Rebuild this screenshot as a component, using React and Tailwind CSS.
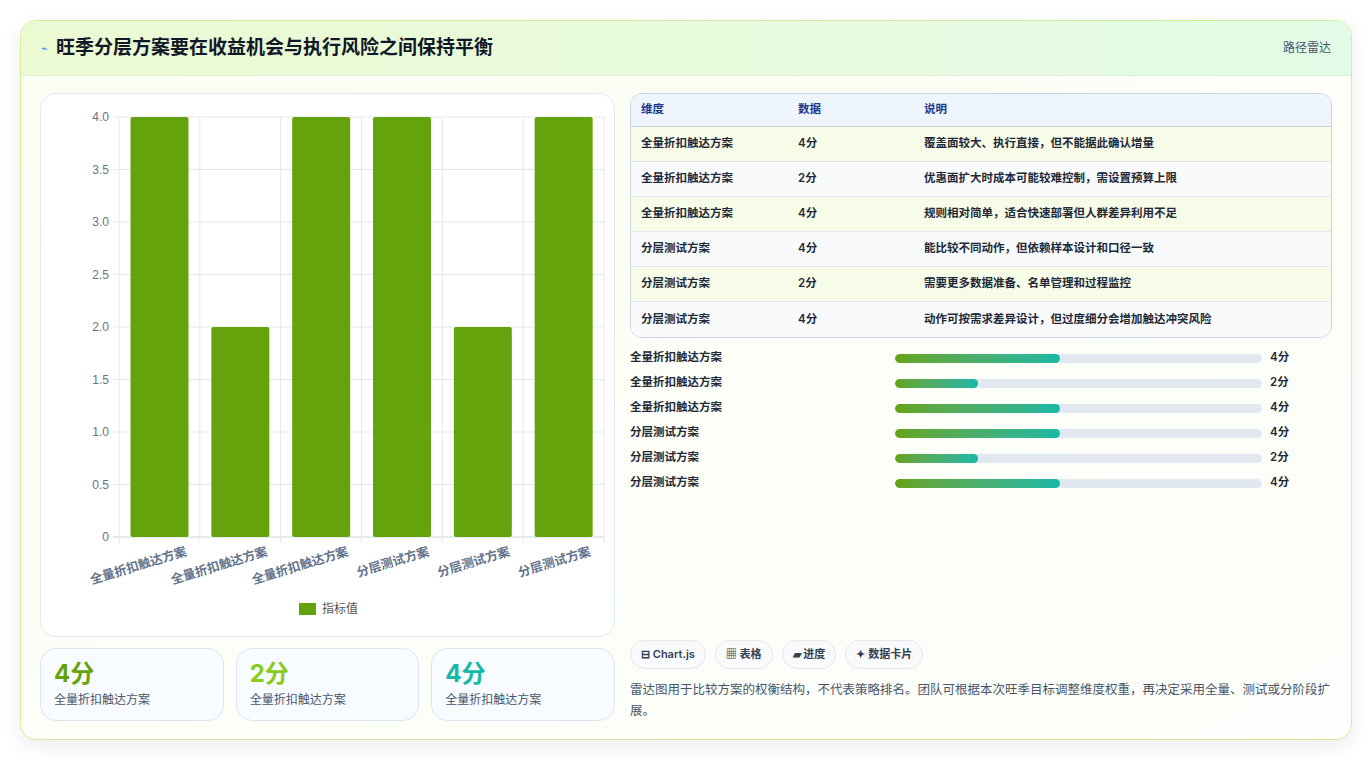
import React from "react";

const cats = ["全量折扣触达方案","全量折扣触达方案","全量折扣触达方案","分层测试方案","分层测试方案","分层测试方案"];
const vals = [4,2,4,4,2,4];
const rows = [
  ["全量折扣触达方案","4分","覆盖面较大、执行直接，但不能据此确认增量"],
  ["全量折扣触达方案","2分","优惠面扩大时成本可能较难控制，需设置预算上限"],
  ["全量折扣触达方案","4分","规则相对简单，适合快速部署但人群差异利用不足"],
  ["分层测试方案","4分","能比较不同动作，但依赖样本设计和口径一致"],
  ["分层测试方案","2分","需要更多数据准备、名单管理和过程监控"],
  ["分层测试方案","4分","动作可按需求差异设计，但过度细分会增加触达冲突风险"],
];

function Chart() {
  const x0 = 78, x1 = 563, y0 = 23, y1 = 443;
  const cw = (x1 - x0) / 6;
  const ticks = [0,0.5,1,1.5,2,2.5,3,3.5,4];
  return (
    <svg width="573" height="542" className="block">
      {ticks.map(t => {
        const y = y1 - (t / 4) * (y1 - y0);
        return (
          <g key={t}>
            <line x1={x0 - 6} x2={x1} y1={y} y2={y} stroke={t === 0 ? "#cbd5e1" : "#e5e7eb"} />
            <text x={x0 - 10} y={y + 4} textAnchor="end" fontSize="12" fill="#6b7280" fontFamily="Liberation Sans, sans-serif">{t === 0 ? "0" : t.toFixed(1)}</text>
          </g>
        );
      })}
      {Array.from({ length: 7 }).map((_, i) => (
        <line key={i} x1={x0 + i * cw} x2={x0 + i * cw} y1={y0} y2={y1 + 6} stroke="#e5e7eb" />
      ))}
      {vals.map((v, i) => {
        const h = (v / 4) * (y1 - y0);
        return <rect key={i} x={x0 + i * cw + 11.5} y={y1 - h} width={58} height={h} rx="2" fill="#65a30d" />;
      })}
      {cats.map((c, i) => (
        <text key={i} transform={`translate(${x0 + i * cw + cw / 2 + 28},${y1 + 18}) rotate(-17)`} textAnchor="end" fontSize="12.5" fontWeight="600" fill="#64748b" fontFamily="Noto Sans CJK SC, sans-serif">{c}</text>
      ))}
      <rect x="258" y="509" width="17" height="12" fill="#65a30d" />
      <text x="281" y="519" fontSize="12" fill="#555" fontFamily="Noto Sans CJK SC, sans-serif">指标值</text>
    </svg>
  );
}

export default function App() {
  return (
    <div className="w-[1372px] h-[760px] bg-white p-5" style={{ fontFamily: "Inter, 'Noto Sans CJK SC', sans-serif" }}>
      <div className="h-[720px] rounded-2xl border border-[#d4ed9c] shadow-[0_6px_20px_rgba(0,0,0,0.08)] overflow-hidden bg-gradient-to-br from-[#fbfef3] to-[#fdfefb] flex flex-col">
        <div className="h-[55px] shrink-0 flex items-center justify-between px-5 bg-gradient-to-r from-[#ecfad2] to-[#e2fbe6] border-b border-[#e3ecd6]">
          <div className="flex items-center gap-2">
            <span className="text-[11px] text-[#3b82f6]">⌁</span>
            <span className="text-[19px] font-bold text-[#111827]">旺季分层方案要在收益机会与执行风险之间保持平衡</span>
          </div>
          <span className="text-[12px] text-[#475569]">路径雷达</span>
        </div>
        <div className="flex-1 flex gap-[15px] px-[19px] pt-[17px]">
          <div className="w-[575px] flex flex-col gap-[11px]">
            <div className="h-[544px] rounded-2xl border border-[#e2e8f0] bg-white">
              <Chart />
            </div>
            <div className="grid grid-cols-3 gap-[12px]">
              {[["4分","text-[#65a30d]"],["2分","text-[#84cc16]"],["4分","text-[#14b8a6]"]].map(([v, c], i) => (
                <div key={i} className="h-[73px] rounded-2xl border border-[#dbe5f1] bg-[#f8fbff] px-[13px] pt-[10px]">
                  <div className={`text-[24px] font-bold leading-[30px] ${c}`}>{v}</div>
                  <div className="text-[12px] text-[#475569] mt-[2px]">全量折扣触达方案</div>
                </div>
              ))}
            </div>
          </div>
          <div className="flex-1 flex flex-col">
            <div className="rounded-xl border border-[#cbd5e1] overflow-hidden">
              <div className="h-[33px] flex items-center bg-[#eef5ff] text-[11.5px] font-bold text-[#1e3a8a] border-b border-[#cbd5e1]">
                <span className="w-[167px] pl-[10px]">维度</span>
                <span className="w-[126px]">数据</span>
                <span>说明</span>
              </div>
              {rows.map((r, i) => (
                <div key={i} className={`h-[35px] flex items-center text-[11.5px] text-[#1f2937] ${i < 5 ? "border-b border-[#e2e8f0]" : ""} ${i % 2 === 0 ? "bg-[#f7fce9]" : "bg-[#f8fafc]"}`}>
                  <span className="w-[167px] pl-[10px] font-semibold">{r[0]}</span>
                  <span className="w-[126px] font-semibold">{r[1]}</span>
                  <span className="font-semibold">{r[2]}</span>
                </div>
              ))}
            </div>
            <div className="flex flex-col gap-[9px] mt-[12px]">
              {rows.map((r, i) => (
                <div key={i} className="h-[16px] flex items-center text-[11.5px] font-semibold text-[#1f2937]">
                  <span className="w-[265px]">{r[0]}</span>
                  <div className="w-[367px] h-[9px] rounded-full bg-[#e2e8f0] overflow-hidden">
                    <div className="h-full rounded-full bg-gradient-to-r from-[#65a30d] to-[#14b8a6]" style={{ width: r[1] === "4分" ? "45%" : "22.5%" }} />
                  </div>
                  <span className="ml-[8px]">{r[1]}</span>
                </div>
              ))}
            </div>
            <div className="mt-auto mb-[18px]">
              <div className="flex gap-[9px]">
                {["⊟ Chart.js","▦ 表格","▰ 进度","✦ 数据卡片"].map((t, i) => (
                  <span key={i} className="h-[29px] px-[10px] flex items-center rounded-full border border-[#e2e8f0] bg-[#f8fafc] text-[11px] font-semibold text-[#334155]">{t}</span>
                ))}
              </div>
              <p className="mt-[10px] text-[12.5px] leading-[21px] text-[#475569]">雷达图用于比较方案的权衡结构，不代表策略排名。团队可根据本次旺季目标调整维度权重，再决定采用全量、测试或分阶段扩展。</p>
            </div>
          </div>
        </div>
      </div>
    </div>
  );
}
